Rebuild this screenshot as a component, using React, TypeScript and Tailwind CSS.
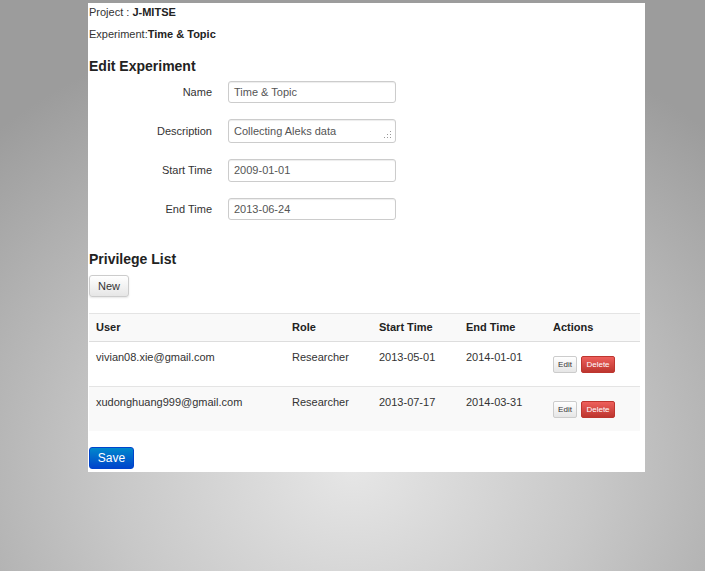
export default function App() {
  const fields = [
    { label: 'Name', value: 'Time & Topic', h: 'h-[22px]' },
    { label: 'Description', value: 'Collecting Aleks data', h: 'h-[24px]', grip: true },
    { label: 'Start Time', value: '2009-01-01', h: 'h-[23px]' },
    { label: 'End Time', value: '2013-06-24', h: 'h-[22px]' },
  ];

  const rows = [
    { user: 'vivian08.xie@gmail.com', role: 'Researcher', start: '2013-05-01', end: '2014-01-01', h: 'h-[45px]', bg: 'bg-white' },
    { user: 'xudonghuang999@gmail.com', role: 'Researcher', start: '2013-07-17', end: '2014-03-31', h: 'h-[44px]', bg: 'bg-[#f9f9f9]' },
  ];

  const cols = 'grid grid-cols-[196px_87px_87px_87px_94px]';

  return (
    <div className="w-[705px] h-[571px] overflow-hidden bg-[radial-gradient(ellipse_75%_80%_at_50%_82%,#e6e6e6_0%,#c8c8c8_45%,#9c9c9c_100%)] pt-[3px] font-['Liberation_Sans',Arial,sans-serif] text-[11px] text-[#333]">
      <div className="ml-[88px] w-[557px] h-[469px] bg-white pl-[1px]">
        <div className="h-[18px] flex items-center">
          <span>Project :&nbsp;</span>
          <span className="font-bold text-[#222]">J-MITSE</span>
        </div>
        <div className="mt-[4px] h-[18px] flex items-center">
          <span>Experiment:</span>
          <span className="font-bold text-[#222]">Time &amp; Topic</span>
        </div>
        <div className="mt-[14px] h-[18px] flex items-center text-[14px] font-bold text-[#222]">Edit Experiment</div>

        <div className="mt-[6px] flex flex-col gap-[16px]">
          {fields.map((f) => (
            <div key={f.label} className="flex items-center">
              <div className="w-[123px] text-right">{f.label}</div>
              <div className={`relative ml-[16px] w-[168px] ${f.h} flex items-center pl-[5px] border border-[#cccccc] rounded-[3px] shadow-[inset_0_1px_1px_rgba(0,0,0,0.075)] text-[#555]`}>
                {f.value}
                {f.grip && (
                  <svg className="absolute right-[3px] bottom-[3px]" width="8" height="8" viewBox="0 0 8 8">
                    <rect x="6" y="0" width="1" height="1" fill="#999" />
                    <rect x="3" y="3" width="1" height="1" fill="#999" />
                    <rect x="6" y="3" width="1" height="1" fill="#999" />
                    <rect x="0" y="6" width="1" height="1" fill="#999" />
                    <rect x="3" y="6" width="1" height="1" fill="#999" />
                    <rect x="6" y="6" width="1" height="1" fill="#999" />
                  </svg>
                )}
              </div>
            </div>
          ))}
        </div>

        <div className="mt-[30px] h-[18px] flex items-center text-[14px] font-bold text-[#222]">Privilege List</div>
        <button className="mt-[7px] w-[40px] h-[22px] flex items-center justify-center border border-[#cccccc] rounded-[3px] bg-[linear-gradient(#ffffff,#e6e6e6)] shadow-[0_1px_2px_rgba(0,0,0,0.1)] text-[#333]">
          New
        </button>

        <div className="mt-[16px] w-[551px] border-t border-[#e4e4e4]">
          <div className={`${cols} h-[28px] items-center bg-[#f9f9f9] border-b border-[#dddddd] font-bold text-[#222]`}>
            <div className="pl-[7px]">User</div>
            <div className="pl-[7px]">Role</div>
            <div className="pl-[7px]">Start Time</div>
            <div className="pl-[7px]">End Time</div>
            <div className="pl-[7px]">Actions</div>
          </div>
          {rows.map((r, i) => (
            <div key={r.user} className={`${cols} ${r.h} ${r.bg} ${i === 0 ? 'border-b border-[#e4e4e4]' : ''}`}>
              <div className="pl-[7px] pt-[7px]">{r.user}</div>
              <div className="pl-[7px] pt-[7px]">{r.role}</div>
              <div className="pl-[7px] pt-[7px]">{r.start}</div>
              <div className="pl-[7px] pt-[7px]">{r.end}</div>
              <div className="pl-[7px] pt-[14px] flex items-start gap-[4px]">
                <button className="w-[24px] h-[17px] flex items-center justify-center border border-[#cccccc] rounded-[2px] bg-[linear-gradient(#ffffff,#e6e6e6)] text-[8px] text-[#333]">
                  Edit
                </button>
                <button className="w-[34px] h-[17px] flex items-center justify-center border border-[#bd362f] rounded-[2px] bg-[linear-gradient(#ee5f5b,#bd362f)] text-[8px] text-white">
                  Delete
                </button>
              </div>
            </div>
          ))}
        </div>

        <button className="mt-[16px] w-[45px] h-[22px] flex items-center justify-center rounded-[3px] border border-[#0044cc] bg-[linear-gradient(#0088cc,#0044cc)] text-[12px] text-white">
          Save
        </button>
      </div>
    </div>
  );
}
